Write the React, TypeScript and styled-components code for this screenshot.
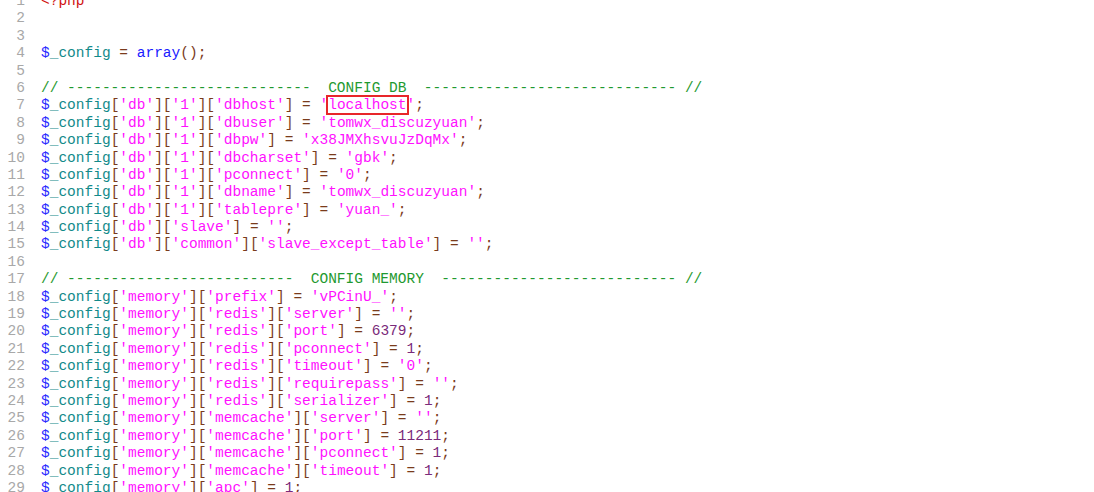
import React from "react";
import styled, { createGlobalStyle } from "styled-components";

const GlobalStyle = createGlobalStyle`
  html, body {
    margin: 0;
    padding: 0;
    background: #ffffff;
    overflow: hidden;
  }
`;

const Editor = styled.div`
  display: flex;
  flex-direction: column;
  margin-top: -7px;
  font-family: "Liberation Mono", "Courier New", monospace;
  font-size: 14.5px;
  line-height: 17.4px;
  white-space: pre;
  background: #ffffff;
`;

const Row = styled.div`
  display: flex;
  height: 17.4px;
`;

const LineNo = styled.span`
  width: 25px;
  text-align: right;
  color: #a8a8a8;
  flex: none;
`;

const Code = styled.span`
  margin-left: 16px;
`;

type Kind = "dollar" | "var" | "punc" | "str" | "num" | "kw" | "comment" | "php" | "ws";

const colors: Record<Kind, string> = {
  dollar: "#2a2aff",
  var: "#128a8a",
  punc: "#7a3b1c",
  str: "#ff10ff",
  num: "#7a2a7a",
  kw: "#1a1aff",
  comment: "#1f9a30",
  php: "#d01010",
  ws: "inherit",
};

const Tok = styled.span<{ $kind: Kind; $mark?: boolean }>`
  color: ${(p) => colors[p.$kind]};
  outline: ${(p) => (p.$mark ? "2.5px solid #e8262a" : "none")};
`;

const lines: string[] = [
  "<?php",
  "",
  "",
  "$_config = array();",
  "",
  "// ----------------------------  CONFIG DB  ----------------------------- //",
  "$_config['db']['1']['dbhost'] = 'localhost';",
  "$_config['db']['1']['dbuser'] = 'tomwx_discuzyuan';",
  "$_config['db']['1']['dbpw'] = 'x38JMXhsvuJzDqMx';",
  "$_config['db']['1']['dbcharset'] = 'gbk';",
  "$_config['db']['1']['pconnect'] = '0';",
  "$_config['db']['1']['dbname'] = 'tomwx_discuzyuan';",
  "$_config['db']['1']['tablepre'] = 'yuan_';",
  "$_config['db']['slave'] = '';",
  "$_config['db']['common']['slave_except_table'] = '';",
  "",
  "// --------------------------  CONFIG MEMORY  --------------------------- //",
  "$_config['memory']['prefix'] = 'vPCinU_';",
  "$_config['memory']['redis']['server'] = '';",
  "$_config['memory']['redis']['port'] = 6379;",
  "$_config['memory']['redis']['pconnect'] = 1;",
  "$_config['memory']['redis']['timeout'] = '0';",
  "$_config['memory']['redis']['requirepass'] = '';",
  "$_config['memory']['redis']['serializer'] = 1;",
  "$_config['memory']['memcache']['server'] = '';",
  "$_config['memory']['memcache']['port'] = 11211;",
  "$_config['memory']['memcache']['pconnect'] = 1;",
  "$_config['memory']['memcache']['timeout'] = 1;",
  "$_config['memory']['apc'] = 1;",
];

type Token = { kind: Kind; text: string; mark?: boolean };

function tokenize(line: string): Token[] {
  if (line.startsWith("<?php")) return [{ kind: "php", text: line }];
  if (line.startsWith("//")) return [{ kind: "comment", text: line }];
  const out: Token[] = [];
  const re = /(\$)|([A-Za-z_][A-Za-z0-9_]*)|('[^']*')|(\d+)|(\s+)|(.)/g;
  let m: RegExpExecArray | null;
  let afterDollar = false;
  while ((m = re.exec(line))) {
    if (m[1]) {
      out.push({ kind: "dollar", text: "$" });
      afterDollar = true;
      continue;
    }
    if (m[2]) {
      out.push({ kind: afterDollar ? "var" : "kw", text: m[2] });
    } else if (m[3]) {
      if (m[3] === "'localhost'") {
        out.push({ kind: "str", text: "'" });
        out.push({ kind: "str", text: "localhost", mark: true });
        out.push({ kind: "str", text: "'" });
      } else {
        out.push({ kind: "str", text: m[3] });
      }
    } else if (m[4]) {
      out.push({ kind: "num", text: m[4] });
    } else if (m[5]) {
      out.push({ kind: "ws", text: m[5] });
    } else {
      out.push({ kind: "punc", text: m[6] });
    }
    afterDollar = false;
  }
  return out;
}

export default function App() {
  return (
    <>
      <GlobalStyle />
      <Editor>
        {lines.map((line, i) => (
          <Row key={i}>
            <LineNo>{i + 1}</LineNo>
            <Code>
              {tokenize(line).map((t, j) => (
                <Tok key={j} $kind={t.kind} $mark={t.mark}>
                  {t.text}
                </Tok>
              ))}
            </Code>
          </Row>
        ))}
      </Editor>
    </>
  );
}
